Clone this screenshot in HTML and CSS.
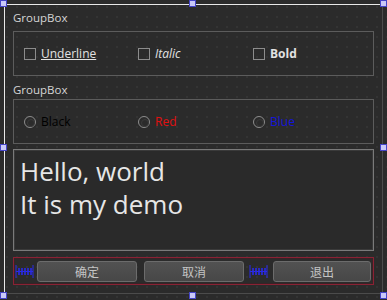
FILE: index.html
```html
<!DOCTYPE html>
<html>
<head>
    <meta charset="UTF-8">
    <title>Form</title>
    <link rel="stylesheet" href="styles.css">
</head>
<body>
<div class="canvas">
    <div class="form">
        <div class="gb-title">GroupBox</div>
        <div class="gb-frame">
            <label class="opt"><span class="check"></span><span class="u">Underline</span></label>
            <label class="opt"><span class="check"></span><span class="i">Italic</span></label>
            <label class="opt"><span class="check"></span><span class="b">Bold</span></label>
        </div>
        <div class="gb-title second">GroupBox</div>
        <div class="gb-frame">
            <label class="opt"><span class="radio"></span><span class="black">Black</span></label>
            <label class="opt"><span class="radio"></span><span class="red">Red</span></label>
            <label class="opt"><span class="radio"></span><span class="blue">Blue</span></label>
        </div>
        <div class="edit">Hello, world<br>It is my demo</div>
        <div class="btn-row">
            <svg class="spacer" width="19" height="15" viewBox="0 0 19 15">
                <path d="M1 1V14M18 1V14M1 7.5H18" stroke="#2a2ae8" stroke-width="1" fill="none"/>
                <path d="M4 4V11M7 4V11M10 4V11M13 4V11M16 4V11" stroke="#2a2ae8" stroke-width="1.6" fill="none"/>
            </svg>
            <button class="btn b1">确定</button>
            <button class="btn b2">取消</button>
            <svg class="spacer s2" width="19" height="15" viewBox="0 0 19 15">
                <path d="M1 1V14M18 1V14M1 7.5H18" stroke="#2a2ae8" stroke-width="1" fill="none"/>
                <path d="M4 4V11M7 4V11M10 4V11M13 4V11M16 4V11" stroke="#2a2ae8" stroke-width="1.6" fill="none"/>
            </svg>
            <button class="btn b3">退出</button>
        </div>
    </div>
    <span class="handle h-tl"></span>
    <span class="handle h-tc"></span>
    <span class="handle h-tr"></span>
    <span class="handle h-ml"></span>
    <span class="handle h-mr"></span>
    <span class="handle h-bl"></span>
    <span class="handle h-bc"></span>
    <span class="handle h-br"></span>
</div>
</body>
</html>
```
FILE: styles.css
```css
* { margin: 0; padding: 0; box-sizing: border-box;}
body { background: #2b2b2b; font-family: "Open Sans", "Noto Sans CJK SC", sans-serif; color: #d8d8d8;}
.canvas { width: 387px; height: 300px; position: relative; overflow: hidden;
    background-color: #2b2b2b;
    background-image: radial-gradient(#343434 0.8px, transparent 1px);
    background-size: 10px 10px; background-position: 2px 2px;}
.form { margin: 4px 0 0 4px; width: 379px; height: 290px; border-top: 1px solid #e8e8e8; border-left: 1px solid #e8e8e8; border-right: 1px solid #4c4c4c; border-bottom: 1px solid #4c4c4c; padding: 0 0 0 8px; display: flex; flex-direction: column;}
.gb-title { font-size: 11.5px; height: 26px; line-height: 26px; color: #d6d6d6;}
.gb-title.second { height: 23px; line-height: 27px;}
.gb-frame { width: 361px; height: 45px; border: 1px solid #5c5c5c; display: grid; grid-template-columns: 114px 115px 115px; padding-left: 10px; align-items: center;}
.opt { display: flex; align-items: center; font-size: 12px; color: #e2e2e2;}
.check { width: 12px; height: 12px; border: 1px solid #8c8c8c; margin-right: 5px; flex: none;}
.radio { width: 12px; height: 12px; border: 1px solid #8c8c8c; border-radius: 50%; margin-right: 5px; flex: none; position: relative;}
.radio::after { content: ""; position: absolute; left: 2px; top: 2px; width: 6px; height: 6px; border-radius: 50%; border: 1px solid #3a3a3a;}
.u { text-decoration: underline;}
.i { font-style: italic;}
.b { font-weight: bold;}
.black { color: #000;}
.red { color: #e01010;}
.blue { color: #1515d8;}
.edit { margin-top: 5px; width: 361px; height: 102px; border: 1px solid #7a7a7a; box-shadow: inset 0 0 0 1px #3a3a3a; background: #2a2a2a; font-size: 26px; line-height: 33px; padding: 5px 0 0 6px; color: #e6e6e6;}
.btn-row { margin-top: 6px; width: 361px; height: 28px; border: 1px solid #8a2234; box-shadow: inset 0 0 0 1px #3a2226; display: flex; align-items: center; padding-left: 1px;}
.spacer { flex: none;}
.btn { height: 21px; background: linear-gradient(#525252, #474747); border: 1px solid #6c6c6c; border-radius: 3px; color: #c4c4c4; font-family: "Noto Sans CJK SC", sans-serif; font-size: 12px; line-height: 19px;}
.b1 { width: 100px; margin-left: 3px;}
.b2 { width: 100px; margin-left: 7px;}
.s2 { margin-left: 5px;}
.b3 { width: 98px; margin-left: 5px;}
.handle { position: absolute; width: 7px; height: 7px; background: #c9c9f8; border: 1px solid #4545c8;}
.h-tl { left: 0; top: 0;}
.h-tc { left: 189px; top: 0;}
.h-tr { left: 380px; top: 0;}
.h-ml { left: 0; top: 144px;}
.h-mr { left: 380px; top: 144px;}
.h-bl { left: 0; top: 292px;}
.h-bc { left: 189px; top: 292px;}
.h-br { left: 380px; top: 292px;}
```
